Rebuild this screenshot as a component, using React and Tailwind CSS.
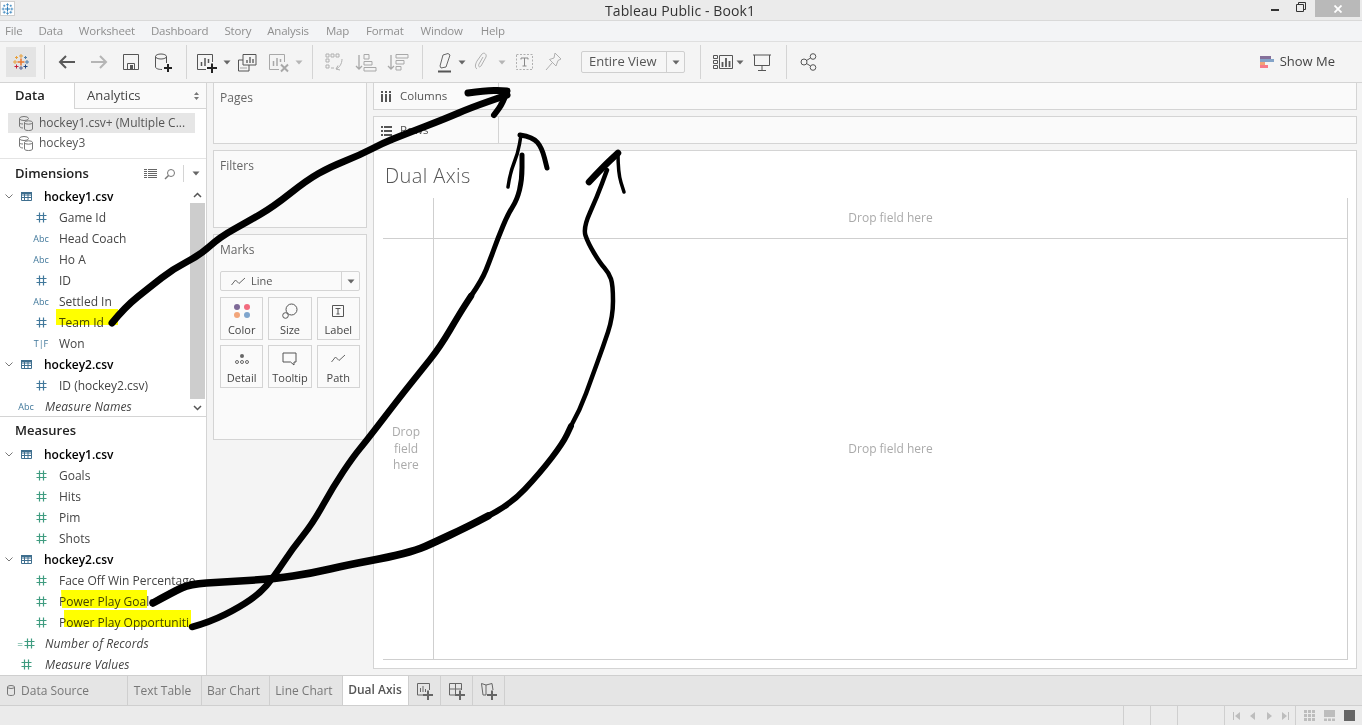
import React from "react";

const menus = [
  { name: "File", cls: "" },
  { name: "Data", cls: "" },
  { name: "Worksheet", cls: "" },
  { name: "Dashboard", cls: "" },
  { name: "Story", cls: "" },
  { name: "Analysis", cls: "" },
  { name: "Map", cls: "ml-px" },
  { name: "Format", cls: "ml-px" },
  { name: "Window", cls: "ml-px" },
  { name: "Help", cls: "ml-[2px]" },
];

// turns the sampled scribble points into a smooth path
function smooth(pts) {
  let d = `M${pts[0][0]} ${pts[0][1]}`;
  for (let i = 1; i < pts.length - 1; i++) {
    const mx = (pts[i][0] + pts[i + 1][0]) / 2;
    const my = (pts[i][1] + pts[i + 1][1]) / 2;
    d += ` Q${pts[i][0]} ${pts[i][1]} ${mx} ${my}`;
  }
  const last = pts[pts.length - 1];
  return d + ` L${last[0]} ${last[1]}`;
}

const ink = [
  { w: 7, pts: [[112, 323], [125, 307], [150, 287], [173, 269], [200, 255], [220, 237], [247, 222], [273, 207], [307, 180], [330, 167], [360, 155], [383, 143], [403, 135], [447, 118], [470, 108], [507, 95]] },
  { w: 7, pts: [[468, 93], [487, 90], [507, 91]] },
  { w: 6, pts: [[507, 91], [503, 103], [494, 115]] },
  { w: 6.5, pts: [[192, 627], [210, 622], [240, 607], [260, 593], [273, 578], [293, 548], [313, 523], [333, 487], [353, 457], [367, 440], [400, 397], [420, 372], [440, 347], [460, 313], [471, 296]] },
  { w: 5, pts: [[471, 296], [482, 280], [490, 260], [498, 238], [508, 214], [517, 200], [522, 180], [522, 155]] },
  { w: 3.5, pts: [[508, 187], [510, 173], [518, 153], [521, 135]] },
  { w: 5, pts: [[520, 135], [533, 137], [542, 148], [547, 168]] },
  { w: 7.5, pts: [[153, 603], [173, 592], [190, 584], [223, 582], [273, 579], [313, 573], [347, 565], [390, 557], [417, 550], [433, 543], [467, 527], [488, 516]] },
  { w: 6, pts: [[488, 516], [510, 505], [540, 473], [563, 443], [571, 426]] },
  { w: 4.5, pts: [[571, 426], [580, 410], [592, 377], [603, 347], [613, 317], [613, 285], [609, 273], [600, 263], [588, 243], [583, 228], [597, 197], [607, 170]] },
  { w: 6.5, pts: [[589, 182], [603, 167], [618, 153]] },
  { w: 3.5, pts: [[618, 153], [618, 173], [624, 192]] },
];

function Ink() {
  return (
    <>
      <svg className="absolute left-0 top-0 mix-blend-multiply pointer-events-none" width="1362" height="725">
        <path d="M56 309H118V325H56Z" fill="#ffff00" />
        <path d="M61 590H147V608H62Z" fill="#ffff00" />
        <path d="M64 610H191V627H64Z" fill="#ffff00" />
      </svg>
      <svg className="absolute left-0 top-0 pointer-events-none" width="1362" height="725" fill="none" stroke="#000" strokeLinecap="round" strokeLinejoin="round">
        {ink.map((s, i) => (
          <path key={i} d={smooth(s.pts)} strokeWidth={s.w} />
        ))}
      </svg>
    </>
  );
}

function Cross({ x, y, r, c, w = 1 }) {
  return <path d={`M${x - r} ${y}H${x + r}M${x} ${y - r}V${y + r}`} stroke={c} strokeWidth={w} fill="none" />;
}

function Logo({ mono }) {
  const blue = "#4f7faa";
  return (
    <svg width="18" height="18" viewBox="0 0 18 18">
      <Cross x={9} y={9} r={3.5} c={mono || "#e8762d"} w={1.5} />
      <Cross x={9} y={3} r={2} c={mono || "#e8a13c"} />
      <Cross x={9} y={15} r={2} c={mono || "#5b6591"} />
      <Cross x={3} y={9} r={2} c={mono || "#e8a13c"} />
      <Cross x={15} y={9} r={2} c={mono || blue} />
      <Cross x={4.5} y={4.5} r={1.5} c={mono || "#e8a13c"} />
      <Cross x={13.5} y={4.5} r={1.5} c={mono || blue} />
      <Cross x={4.5} y={13.5} r={2} c={mono || "#c72037"} />
      <Cross x={13.5} y={13.5} r={2} c={mono || "#1f447e"} />
    </svg>
  );
}

function Sep({ className }) {
  return <div className={`w-px h-[34px] shrink-0 bg-[#d4d4d4] ${className}`} />;
}

function Caret({ className = "", color = "#666" }) {
  return (
    <svg className={`shrink-0 ${className}`} width="8" height="5" viewBox="0 0 8 5">
      <path d="M0.5 0.5H7.5L4 4.5Z" fill={color} />
    </svg>
  );
}

function Ico({ w = 24, className = "", stroke = "#555", children }) {
  return (
    <svg className={`shrink-0 ${className}`} width={w} height="24" viewBox={`0 0 ${w} 24`} fill="none" stroke={stroke} strokeWidth="1">
      {children}
    </svg>
  );
}

function Toolbar() {
  return (
    <div className="h-[41px] shrink-0 bg-[#f4f4f4] border-b border-[#d4d4d4] flex items-center pl-[6px]">
      <div className="w-[30px] h-[30px] bg-[#e4e4e4] flex items-center justify-center"><Logo /></div>
      <Sep className="ml-[8px]" />
      <Ico className="ml-[10px]" stroke="#595959">
        <path d="M20 12H5M11 6L5 12L11 18" strokeWidth="2" />
      </Ico>
      <Ico className="ml-[8px]" stroke="#b5b5b5">
        <path d="M4 12H19M13 6L19 12L13 18" strokeWidth="2" />
      </Ico>
      <Ico className="ml-[8px]">
        <path d="M4.5 4.5H19.5V19.5H4.5ZM8.5 19V13.5H15.5V19" />
        <path d="M11 15H14V19H11Z" fill="#555" stroke="none" />
      </Ico>
      <Ico className="ml-[8px]">
        <ellipse cx="10" cy="6.5" rx="5.5" ry="2.5" />
        <path d="M4.5 6.5V17C4.5 18.3 7 19.5 11 19.5M15.5 6.5V13" />
        <path d="M13 18H21M17 14V22" stroke="#222" strokeWidth="2" />
      </Ico>
      <Sep className="ml-[11px]" />
      <Ico className="ml-[8px]">
        <path d="M11 19.5H2.5V4.5H17.5V12" />
        <path d="M6.5 16V12M10 16V8M13.5 13V9" strokeWidth="1.5" />
        <path d="M12 18H22M17 13.5V23" stroke="#222" strokeWidth="2" />
      </Ico>
      <Caret className="ml-[4px]" />
      <Ico className="ml-[6px]">
        <path d="M6 10H1.5V21H12V15M6 4.5H19V15H6Z" />
        <path d="M10 13V10M13 13V7M16 13V9" strokeWidth="1.3" />
        <path d="M3.5 18H10" strokeDasharray="1 1" />
      </Ico>
      <Ico className="ml-[6px]" stroke="#a8a8a8">
        <path d="M12 19.5H2.5V4.5H17.5V12" />
        <path d="M6.5 16V11M10 16V8M13.5 12V9" strokeWidth="1.5" />
        <path d="M14 14.5L21 21.5M21 14.5L14 21.5" strokeWidth="2" />
      </Ico>
      <Caret className="ml-[4px]" color="#b5b5b5" />
      <Sep className="ml-[9px]" />
      <Ico className="ml-[9px]" stroke="#b0b0b0">
        <path d="M4 4H7V7H4ZM9 4H12V7H9ZM14 4H17V7H14ZM4 9H7V12H4ZM4 15H7V18H4ZM9 18H12" />
        <path d="M20 9C20 14 17 18 14 19M14 19L16 15.5M14 19L18 20" />
      </Ico>
      <Ico className="ml-[8px]" stroke="#a8a8a8">
        <path d="M5 5V19M2 16L5 19L8 16" strokeWidth="1.3" />
        <path d="M10 4.5H15V9H10ZM10 11.5H18V15H10ZM10 17.5H22V21H10Z" />
      </Ico>
      <Ico className="ml-[8px]" stroke="#a8a8a8">
        <path d="M5 5V19M2 16L5 19L8 16" strokeWidth="1.3" />
        <path d="M10 4.5H22V8H10ZM10 10.5H18V14H10ZM10 16.5H15V20H10Z" />
      </Ico>
      <Sep className="ml-[12px]" />
      <Ico className="ml-[10px]" stroke="#666">
        <path d="M7 16L10 5L15 3.5L17 5L13 17L8 18Z" />
        <path d="M5 21.5H18" strokeWidth="2" stroke="#555" />
      </Ico>
      <Caret className="ml-[1px]" />
      <Ico className="ml-[3px]" stroke="#b0b0b0">
        <path d="M8 19C5 17 7 13 8 11L13 4C15 2 18 4 17 7L12 16C10 18 9 16 10 14L14 7" />
      </Ico>
      <Caret className="ml-[5px]" color="#b5b5b5" />
      <Ico className="ml-[6px]" stroke="#b0b0b0">
        <path d="M4.5 4.5H20.5V19.5H4.5Z" strokeDasharray="2 1.5" />
        <path d="M9 8H16M12.5 8V16M10.5 16H14.5M9 8V9.5M16 8V9.5" stroke="#888" />
      </Ico>
      <Ico className="ml-[5px]" stroke="#b0b0b0">
        <path d="M14 3L20 9L17 10.5L15 16L8.5 9.5L13 8ZM11 13L5 20" />
      </Ico>
      <div className="ml-[16px] w-[104px] h-[22px] shrink-0 border border-[#cfcfcf] rounded-[2px] flex items-center bg-[#f6f6f6]">
        <div className="flex-1 h-full flex items-center pl-[7px] text-[13px] text-[#555] border-r border-[#cfcfcf]">Entire View</div>
        <div className="w-[17px] flex justify-center"><Caret /></div>
      </div>
      <Sep className="ml-[15px]" />
      <Ico className="ml-[11px]" w="22">
        <path d="M1.5 5.5H5.5V8.5H1.5ZM1.5 10.5H5.5V13.5H1.5ZM1.5 15.5H5.5V18.5H1.5ZM7.5 5.5H20.5V18.5H7.5Z" />
        <path d="M10.5 17V12M14 17V8M17.5 17V11" strokeWidth="1.8" />
      </Ico>
      <Caret className="ml-[2px]" />
      <Ico className="ml-[8px]" w="20">
        <path d="M1 5H19M2.5 5V15.5H17.5V5M10 15.5V20M6 20.5H14" />
      </Ico>
      <Sep className="ml-[14px]" />
      <Ico className="ml-[13px]" w="18">
        <circle cx="4" cy="12" r="3" />
        <circle cx="13" cy="6.5" r="2.8" />
        <circle cx="13" cy="17.5" r="2.8" />
        <path d="M6.5 10.5L10.5 8M6.5 13.5L10.5 16" />
      </Ico>
      <div className="ml-auto mr-[27px] flex items-center">
        <div className="w-[15px] flex flex-col">
          <div className="w-[11px] h-[3px] bg-[#85709a]" />
          <div className="w-[14px] h-[3px] bg-[#84a4c8]" />
          <div className="w-[5px] h-[3px] bg-[#f0a478]" />
          <div className="w-[8px] h-[3px] bg-[#f87a88]" />
        </div>
        <span className="ml-[5px] text-[13px] text-[#444]">Show Me</span>
      </div>
    </div>
  );
}

function TableIcon() {
  return (
    <svg className="shrink-0" width="11" height="11" viewBox="0 0 11 11" fill="none" stroke="#3f6f8f">
      <path d="M0.5 1.5H10.5V9.5H0.5ZM0.5 4H10.5M0.5 6.5H10.5M3.5 3V9.5M7 3V9.5" />
      <path d="M0 1H11V3H0Z" fill="#3f6f8f" stroke="none" />
    </svg>
  );
}

function Hash({ c }) {
  return (
    <svg width="11" height="11" viewBox="0 0 11 11" fill="none" stroke={c} strokeWidth="1.2">
      <path d="M0.5 3.5H10.5M0.5 7.5H10.5M3.5 0.5V10.5M7.5 0.5V10.5" />
    </svg>
  );
}

const BLUE = "#41789b";
const GREEN = "#3f9c80";

function TypeIcon({ t, c }) {
  if (t === "#") return <Hash c={c} />;
  if (t === "=#")
    return (
      <span className="flex items-center">
        <span className="text-[10px] leading-none mr-px" style={{ color: c }}>=</span>
        <Hash c={c} />
      </span>
    );
  return <span className="text-[9px] leading-none font-medium" style={{ color: c }}>{t}</span>;
}

function Table({ name }) {
  return (
    <div className="h-[21px] flex items-center">
      <svg className="ml-[5px] mr-[8px] shrink-0" width="8" height="5" viewBox="0 0 8 5" fill="none" stroke="#777" strokeWidth="1">
        <path d="M0.5 0.5L4 4L7.5 0.5" />
      </svg>
      <TableIcon />
      <span className="ml-[12px] text-[12px] font-semibold text-black">{name}</span>
    </div>
  );
}

function Field({ t, c = BLUE, name }) {
  return (
    <div className="h-[21px] flex items-center whitespace-nowrap">
      <div className="ml-[30px] w-[22px] flex justify-center shrink-0"><TypeIcon t={t} c={c} /></div>
      <span className="ml-[7px] text-[12px] text-[#444]">{name}</span>
    </div>
  );
}

function Special({ t, c = BLUE, name }) {
  return (
    <div className="h-[21px] flex items-center whitespace-nowrap">
      <div className="ml-[15px] w-[22px] flex justify-center shrink-0"><TypeIcon t={t} c={c} /></div>
      <span className="ml-[8px] text-[12px] italic tracking-[0.1px] text-[#444]">{name}</span>
    </div>
  );
}

function SourceIcon() {
  return (
    <svg className="shrink-0" width="16" height="16" viewBox="0 0 16 16" fill="none" stroke="#777">
      <ellipse cx="6" cy="3.5" rx="4.5" ry="2" />
      <path d="M1.5 3.5V11C1.5 12 3 13 5 13M1.5 7.5C1.5 8.5 3 9 5 9" />
      <ellipse cx="10.5" cy="7.5" rx="4" ry="1.7" />
      <path d="M6.5 7.5V14C6.5 15 8.5 15.5 10.5 15.5C12.5 15.5 14.5 15 14.5 14V7.5" />
    </svg>
  );
}

function DataPanel() {
  return (
    <div className="w-[207px] shrink-0 bg-white border-r border-[#d4d4d4] flex flex-col h-full">
      <div className="h-[26px] flex shrink-0">
        <div className="w-[75px] border-r border-[#d4d4d4] flex items-center pl-[15px] text-[13px] font-semibold text-[#222]">Data</div>
        <div className="flex-1 bg-[#fafafa] border-b border-[#d4d4d4] flex items-center pl-[12px] text-[13px] text-[#444]">
          Analytics
          <svg className="ml-auto mr-[6px]" width="7" height="10" viewBox="0 0 7 10">
            <path d="M3.5 1L6 4H1ZM3.5 9L1 6H6Z" fill="#777" />
          </svg>
        </div>
      </div>
      <div className="h-[50px] shrink-0 border-b border-[#e4e4e4] pt-[4px] pl-[8px]">
        <div className="w-[187px] h-[20px] bg-[#e6e6e6] flex items-center pl-[10px] text-[12px] text-[#555]">
          <SourceIcon />
          <span className="ml-[5px] whitespace-nowrap">hockey1.csv+ (Multiple C...</span>
        </div>
        <div className="w-[187px] h-[20px] flex items-center pl-[10px] text-[12px] text-[#555]">
          <SourceIcon />
          <span className="ml-[5px]">hockey3</span>
        </div>
      </div>
      <div className="h-[27px] shrink-0 flex items-center pl-[15px] pt-[2px]">
        <span className="text-[13px] font-semibold text-[#222]">Dimensions</span>
        <svg className="ml-auto" width="13" height="10" viewBox="0 0 13 10" fill="#666">
          <path d="M0 0H3V1H0ZM4 0H13V1H4ZM0 2H3V3H0ZM4 2H13V3H4ZM0 4H3V5H0ZM4 4H13V5H4ZM0 6H3V7H0ZM4 6H13V7H4ZM0 8H3V9H0ZM4 8H13V9H4Z" />
        </svg>
        <svg className="ml-[7px]" width="12" height="12" viewBox="0 0 12 12" fill="none" stroke="#777">
          <circle cx="7" cy="5" r="3.5" />
          <path d="M4.5 7.5L1 11" strokeWidth="1.5" />
        </svg>
        <div className="ml-[7px] w-px h-[17px] bg-[#d4d4d4]" />
        <Caret className="ml-[8px] mr-[6px]" />
      </div>
      <div className="h-[231px] shrink-0 flex border-b border-[#d4d4d4]">
        <div className="w-[190px] shrink-0">
          <Table name="hockey1.csv" />
          <Field t="#" name="Game Id" />
          <Field t="Abc" name="Head Coach" />
          <Field t="Abc" name="Ho A" />
          <Field t="#" name="ID" />
          <Field t="Abc" name="Settled In" />
          <Field t="#" name="Team Id" />
          <Field t="T|F" name="Won" />
          <Table name="hockey2.csv" />
          <Field t="#" name="ID (hockey2.csv)" />
          <Special t="Abc" name="Measure Names" />
        </div>
        <div className="w-[15px] shrink-0 flex flex-col bg-[#f0f0f0]">
          <div className="h-[17px] bg-white flex items-center justify-center">
            <svg width="9" height="6" viewBox="0 0 9 6" fill="none" stroke="#555" strokeWidth="1.5"><path d="M1 5L4.5 1.5L8 5" /></svg>
          </div>
          <div className="flex-1 bg-[#cdcdcd]" />
          <div className="h-[17px] bg-white flex items-center justify-center">
            <svg width="9" height="6" viewBox="0 0 9 6" fill="none" stroke="#555" strokeWidth="1.5"><path d="M1 1L4.5 4.5L8 1" /></svg>
          </div>
        </div>
      </div>
      <div className="h-[27px] shrink-0 flex items-center pl-[15px] text-[13px] font-semibold text-[#222]">Measures</div>
      <Table name="hockey1.csv" />
      <Field t="#" c={GREEN} name="Goals" />
      <Field t="#" c={GREEN} name="Hits" />
      <Field t="#" c={GREEN} name="Pim" />
      <Field t="#" c={GREEN} name="Shots" />
      <Table name="hockey2.csv" />
      <Field t="#" c={GREEN} name="Face Off Win Percentage" />
      <Field t="#" c={GREEN} name="Power Play Goals" />
      <Field t="#" c={GREEN} name="Power Play Opportuniti..." />
      <Special t="=#" c={GREEN} name="Number of Records" />
      <Special t="#" c={GREEN} name="Measure Values" />
    </div>
  );
}

function MarkBtn({ label, children }) {
  return (
    <div className="h-[43px] border border-[#d4d4d4] flex flex-col items-center bg-[#fafafa]">
      <div className="h-[25px] flex items-center justify-center">{children}</div>
      <span className="text-[11px] leading-[14px] text-[#444] whitespace-nowrap">{label}</span>
    </div>
  );
}

function Shelves() {
  return (
    <div className="w-[154px] ml-[6px] shrink-0 flex flex-col gap-[6px]">
      <div className="h-[61px] bg-[#fafafa] border-x border-b border-[#d4d4d4] pl-[6px] pt-[6px] text-[12px] text-[#666]">Pages</div>
      <div className="h-[78px] bg-[#fafafa] border border-[#d4d4d4] pl-[6px] pt-[6px] text-[12px] text-[#666]">Filters</div>
      <div className="h-[206px] bg-[#fafafa] border border-[#d4d4d4] px-[6px] pt-[6px]">
        <div className="text-[12px] leading-[18px] text-[#666]">Marks</div>
        <div className="mt-[12px] h-[20px] border border-[#d4d4d4] rounded-[2px] flex items-center bg-[#fafafa]">
          <div className="flex-1 h-full flex items-center pl-[10px] border-r border-[#d4d4d4] text-[11px] text-[#555]">
            <svg width="15" height="9" viewBox="0 0 15 9" fill="none" stroke="#666"><path d="M0.5 8L4.5 3L8 6.5L14 1" /></svg>
            <span className="ml-[5px]">Line</span>
          </div>
          <div className="w-[17px] flex justify-center"><Caret /></div>
        </div>
        <div className="mt-[6px] grid grid-cols-3 gap-[5px]">
          <MarkBtn label="Color">
            <svg width="20" height="16" viewBox="0 0 20 16">
              <circle cx="5" cy="4" r="3" fill="#7e6a97" />
              <circle cx="15" cy="4" r="3" fill="#f26b7e" />
              <circle cx="5" cy="12" r="3" fill="#f2a57a" />
              <circle cx="15" cy="12" r="3" fill="#7fa5cd" />
            </svg>
          </MarkBtn>
          <MarkBtn label="Size">
            <svg width="16" height="16" viewBox="0 0 16 16" fill="none" stroke="#555">
              <circle cx="9.5" cy="6.5" r="5.5" />
              <circle cx="3.5" cy="12.5" r="2.8" />
            </svg>
          </MarkBtn>
          <MarkBtn label="Label">
            <svg width="14" height="14" viewBox="0 0 14 14" fill="none" stroke="#555">
              <path d="M1.5 1.5H12.5V12.5H1.5ZM4.5 4.5H9.5M7 4.5V10M5.5 10H8.5" />
            </svg>
          </MarkBtn>
          <MarkBtn label="Detail">
            <svg width="16" height="12" viewBox="0 0 16 12" fill="none" stroke="#666">
              <circle cx="8" cy="3" r="2" fill="#666" stroke="none" />
              <circle cx="3" cy="9" r="1.5" />
              <circle cx="8" cy="9" r="1.5" />
              <circle cx="13" cy="9" r="1.5" />
            </svg>
          </MarkBtn>
          <MarkBtn label="Tooltip">
            <svg width="15" height="14" viewBox="0 0 15 14" fill="none" stroke="#555">
              <path d="M1 1H14V10H12V13L8.5 10H1Z" />
            </svg>
          </MarkBtn>
          <MarkBtn label="Path">
            <svg width="15" height="9" viewBox="0 0 15 9" fill="none" stroke="#666"><path d="M0.5 8L4.5 3L8 6.5L14 1" /></svg>
          </MarkBtn>
        </div>
      </div>
    </div>
  );
}

function Shelf({ h, label, icon }) {
  return (
    <div className={`${h} bg-[#fafafa] border-x border-b border-[#d4d4d4] flex shrink-0`}>
      <div className="w-[125px] border-r border-[#d4d4d4] flex items-center pl-[7px] shrink-0">
        {icon}
        <span className="ml-[8px] text-[11.5px] text-[#555]">{label}</span>
      </div>
    </div>
  );
}

function Canvas() {
  return (
    <div className="w-[984px] ml-[6px] shrink-0 flex flex-col">
      <Shelf
        h="h-[27px]"
        label="Columns"
        icon={
          <svg width="11" height="11" viewBox="0 0 11 11" fill="#555">
            <path d="M0 3H2V11H0ZM4 3H6V11H4ZM8 3H10V11H8ZM0 0H2V2H0ZM4 0H6V2H4ZM8 0H10V2H8Z" />
          </svg>
        }
      />
      <div className="h-[6px]" />
      <div className="border-t border-[#d4d4d4]">
        <Shelf
          h="h-[27px]"
          label="Rows"
          icon={
            <svg width="11" height="11" viewBox="0 0 11 11" fill="#555">
              <path d="M0 1H2V3H0ZM3 1H11V3H3ZM0 5H2V7H0ZM3 5H11V7H3ZM0 9H2V11H0ZM3 9H11V11H3Z" />
            </svg>
          }
        />
      </div>
      <div className="h-[6px]" />
      <div className="h-[519px] bg-white border border-[#d4d4d4] flex flex-col pl-[9px] pr-[8px] pb-[8px]">
        <div className="h-[47px] shrink-0 flex items-center pl-[2px] pt-[3px] text-[20px] font-light tracking-[0.4px] text-[#555]">Dual Axis</div>
        <div className="flex-1 grid grid-cols-[51px_1fr] grid-rows-[41px_1fr] border-r border-b border-[#cfcfcf] text-[12px] text-[#aaa]">
          <div className="border-r border-b border-[#cfcfcf]" />
          <div className="border-b border-[#cfcfcf] flex items-center justify-center">Drop field here</div>
          <div className="border-r border-[#cfcfcf] flex items-center justify-center text-center leading-[16.5px] pr-[4px]">Drop<br />field<br />here</div>
          <div className="flex items-center justify-center">Drop field here</div>
        </div>
      </div>
    </div>
  );
}

function NewTab({ children }) {
  return <div className="w-[32px] h-full border-r border-[#cfcfcf] flex items-center justify-center">{children}</div>;
}

function Tab({ w, label }) {
  return (
    <div className={`${w} h-full border-r border-[#cfcfcf] flex items-center justify-center pr-[4px] text-[12px] text-[#777]`}>{label}</div>
  );
}

function Plus() {
  return <path d="M7 14H17M12 9.5V19" stroke="#666" strokeWidth="2" />;
}

function TabBar() {
  return (
    <div className="h-[31px] shrink-0 bg-[#e5e5e5] border-y border-[#cfcfcf] flex">
      <div className="w-[128px] h-full border-r border-[#cfcfcf] flex items-center pl-[7px] text-[12px] text-[#777]">
        <svg width="8" height="11" viewBox="0 0 8 11" fill="none" stroke="#777">
          <ellipse cx="4" cy="2" rx="3.5" ry="1.5" />
          <path d="M0.5 2V9C0.5 10 2 10.5 4 10.5C6 10.5 7.5 10 7.5 9V2" />
        </svg>
        <span className="ml-[6px]">Data Source</span>
      </div>
      <Tab w="w-[74px]" label="Text Table" />
      <Tab w="w-[68px]" label="Bar Chart" />
      <Tab w="w-[73px]" label="Line Chart" />
      <div className="w-[66px] h-full bg-white border-r border-[#cfcfcf] flex items-center justify-center text-[12px] font-semibold text-[#555] pb-[2px] pr-[1px]">Dual Axis</div>
      <NewTab>
        <svg width="18" height="20" viewBox="0 0 18 20" fill="none" stroke="#666">
          <path d="M9 14H1.5V2.5H13.5V9" />
          <path d="M4.5 11V7M7 11V5M9.5 11V8" />
          <Plus />
        </svg>
      </NewTab>
      <NewTab>
        <svg width="18" height="20" viewBox="0 0 18 20" fill="none" stroke="#666">
          <path d="M9 14H1.5V2.5H13.5V9M1.5 8H13.5M7.5 2.5V14" />
          <Plus />
        </svg>
      </NewTab>
      <NewTab>
        <svg width="18" height="20" viewBox="0 0 18 20" fill="none" stroke="#666">
          <path d="M6 14H3L1.5 2.5L6 4L12 2.5L13 9M6 4V14" />
          <Plus />
        </svg>
      </NewTab>
    </div>
  );
}

function StatusBar() {
  return (
    <div className="h-[19px] shrink-0 bg-[#ebebeb] flex justify-end">
      <div className="w-[27px] border-l border-[#cfcfcf]" />
      <div className="w-[27px] border-l border-[#cfcfcf]" />
      <div className="w-[47px] border-l border-[#cfcfcf]" />
      <div className="w-[71px] border-l border-[#cfcfcf] flex items-center pl-[8px] gap-[8px]">
        <svg width="8" height="8" viewBox="0 0 8 8" fill="#bdbdbd"><path d="M0 0H1V8H0ZM7 0V8L2 4Z" /></svg>
        <svg width="8" height="8" viewBox="0 0 8 8" fill="#bdbdbd"><path d="M6 0V8L1 4Z" /></svg>
        <svg width="8" height="8" viewBox="0 0 8 8" fill="#bdbdbd"><path d="M2 0V8L7 4Z" /></svg>
        <svg width="8" height="8" viewBox="0 0 8 8" fill="#bdbdbd"><path d="M1 0V8L6 4ZM7 0H8V8H7Z" /></svg>
      </div>
      <div className="w-[67px] border-l border-[#cfcfcf] flex items-center pl-[8px] gap-[9px]">
        <svg width="11" height="11" viewBox="0 0 11 11" fill="#bdbdbd">
          <path d="M0 0H3V3H0ZM4 0H7V3H4ZM8 0H11V3H8ZM0 4H3V7H0ZM4 4H7V7H4ZM8 4H11V7H8ZM0 8H3V11H0ZM4 8H7V11H4ZM8 8H11V11H8Z" />
        </svg>
        <svg width="11" height="11" viewBox="0 0 11 11" fill="#bdbdbd">
          <path d="M0 0H11V7H0ZM0 8.5H3V11H0ZM4 8.5H7V11H4ZM8 8.5H11V11H8Z" />
        </svg>
        <div className="w-[11px] h-[11px] bg-[#666]" />
      </div>
    </div>
  );
}

export default function App() {
  return (
    <div className="relative w-[1362px] h-[725px] overflow-hidden flex flex-col bg-[#f4f4f4] font-['Open_Sans','Liberation_Sans',sans-serif]">
      <div className="h-[21px] shrink-0 bg-[#ebebeb] border-b border-[#d9d9d9] flex items-center relative">
        <div className="absolute left-0 top-[1px] w-[15px] h-[15px] bg-white border border-[#cfcfcf] flex items-center justify-center">
          <Logo mono="#2b7cb8" />
        </div>
        <div className="flex-1 text-center text-[14px] tracking-[0.1px] text-[#333] pr-[2px]">Tableau Public - Book1</div>
        <div className="absolute right-[2px] top-0 h-[17px] flex items-start">
          <div className="w-[8px] h-[2px] bg-[#333] mt-[9px]" />
          <svg className="ml-[17px] mt-[2px]" width="10" height="10" viewBox="0 0 10 10" fill="none" stroke="#333">
            <path d="M0.5 2.5H7.5V9.5H0.5ZM2.5 2.5V0.5H9.5V7.5H7.5" />
          </svg>
          <div className="ml-[9px] w-[45px] h-[17px] bg-[#b9b9b9] flex items-center justify-center">
            <svg width="8" height="8" viewBox="0 0 8 8" stroke="#fff" strokeWidth="1.8"><path d="M0.5 0.5L7.5 7.5M7.5 0.5L0.5 7.5" /></svg>
          </div>
        </div>
      </div>
      <div className="h-[21px] shrink-0 bg-[#f3f4f6] border-b border-[#dfdfdf] flex items-center pl-[5px] gap-[16px] text-[11.5px] tracking-[-0.2px] text-[#8f8f8f]">
        {menus.map((m) => (
          <span key={m.name} className={m.cls}>{m.name}</span>
        ))}
      </div>
      <Toolbar />
      <div className="h-[592px] shrink-0 flex">
        <DataPanel />
        <Shelves />
        <Canvas />
      </div>
      <TabBar />
      <StatusBar />
      <Ink />
    </div>
  );
}
